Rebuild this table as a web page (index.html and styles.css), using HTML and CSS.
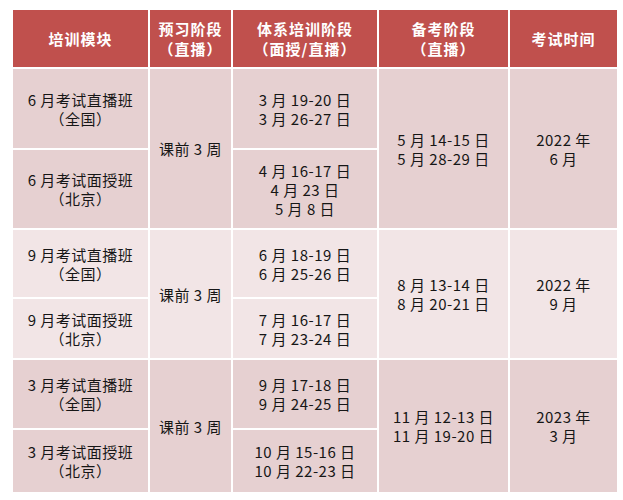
FILE: index.html
```html
<!DOCTYPE html>
<html lang="zh">
<head>
<meta charset="utf-8">
<link rel="stylesheet" href="styles.css">
</head>
<body>
<div class="table">
  <div class="h">培训模块</div>
  <div class="h">预习阶段<br>（直播）</div>
  <div class="h">体系培训阶段<br>（面授/直播）</div>
  <div class="h">备考阶段<br>（直播）</div>
  <div class="h">考试时间</div>

  <div class="c d r1">6 月考试直播班<br>（全国）</div>
  <div class="c d r1 s2">课前 3 周</div>
  <div class="c d r1">3 月 19-20 日<br>3 月 26-27 日</div>
  <div class="c d r1 s2">5 月 14-15 日<br>5 月 28-29 日</div>
  <div class="c d r1 s2">2022 年<br>6 月</div>
  <div class="c d r2">6 月考试面授班<br>（北京）</div>
  <div class="c d r2">4 月 16-17 日<br>4 月 23 日<br>5 月 8 日</div>

  <div class="c l r3">9 月考试直播班<br>（全国）</div>
  <div class="c l r3 s2">课前 3 周</div>
  <div class="c l r3">6 月 18-19 日<br>6 月 25-26 日</div>
  <div class="c l r3 s2">8 月 13-14 日<br>8 月 20-21 日</div>
  <div class="c l r3 s2">2022 年<br>9 月</div>
  <div class="c l r4">9 月考试面授班<br>（北京）</div>
  <div class="c l r4">7 月 16-17 日<br>7 月 23-24 日</div>

  <div class="c d r5">3 月考试直播班<br>（全国）</div>
  <div class="c d r5 s2">课前 3 周</div>
  <div class="c d r5">9 月 17-18 日<br>9 月 24-25 日</div>
  <div class="c d r5 s2">11 月 12-13 日<br>11 月 19-20 日</div>
  <div class="c d r5 s2">2023 年<br>3 月</div>
  <div class="c d r6">3 月考试面授班<br>（北京）</div>
  <div class="c d r6">10 月 15-16 日<br>10 月 22-23 日</div>
</div>
</body>
</html>
```

FILE: styles.css
```css
html, body {
  margin: 0;
  padding: 0;
  background: #ffffff;
}
body {
  padding: 10px 0 0 13px;
  font-family: "Noto Sans CJK SC", "Noto Sans", sans-serif;
}
.table {
  display: grid;
  width: 604px;
  grid-template-columns: 135px 81px 144px 129px 107px;
  grid-template-rows: 57px 79px 78px 67px 59px 68px 62px;
  gap: 2px;
  background: #ffffff;
}
.h {
  background: #c0504d;
  color: #ffffff;
  font-weight: bold;
  font-size: 15px;
  line-height: 20px;
  letter-spacing: 1px;
  display: flex;
  align-items: center;
  justify-content: center;
  text-align: center;
}
.c {
  color: #161616;
  font-size: 15px;
  line-height: 19px;
  letter-spacing: 0.5px;
  display: flex;
  align-items: center;
  justify-content: center;
  text-align: center;
}
.d { background: #e6d0d1; }
.l { background: #f2e5e6; }
.r1 { grid-row: 2; }
.r2 { grid-row: 3; }
.r3 { grid-row: 4; }
.r4 { grid-row: 5; }
.r5 { grid-row: 6; }
.r6 { grid-row: 7; }
.r1.s2 { grid-row: 2 / span 2; }
.r3.s2 { grid-row: 4 / span 2; }
.r5.s2 { grid-row: 6 / span 2; }
```
